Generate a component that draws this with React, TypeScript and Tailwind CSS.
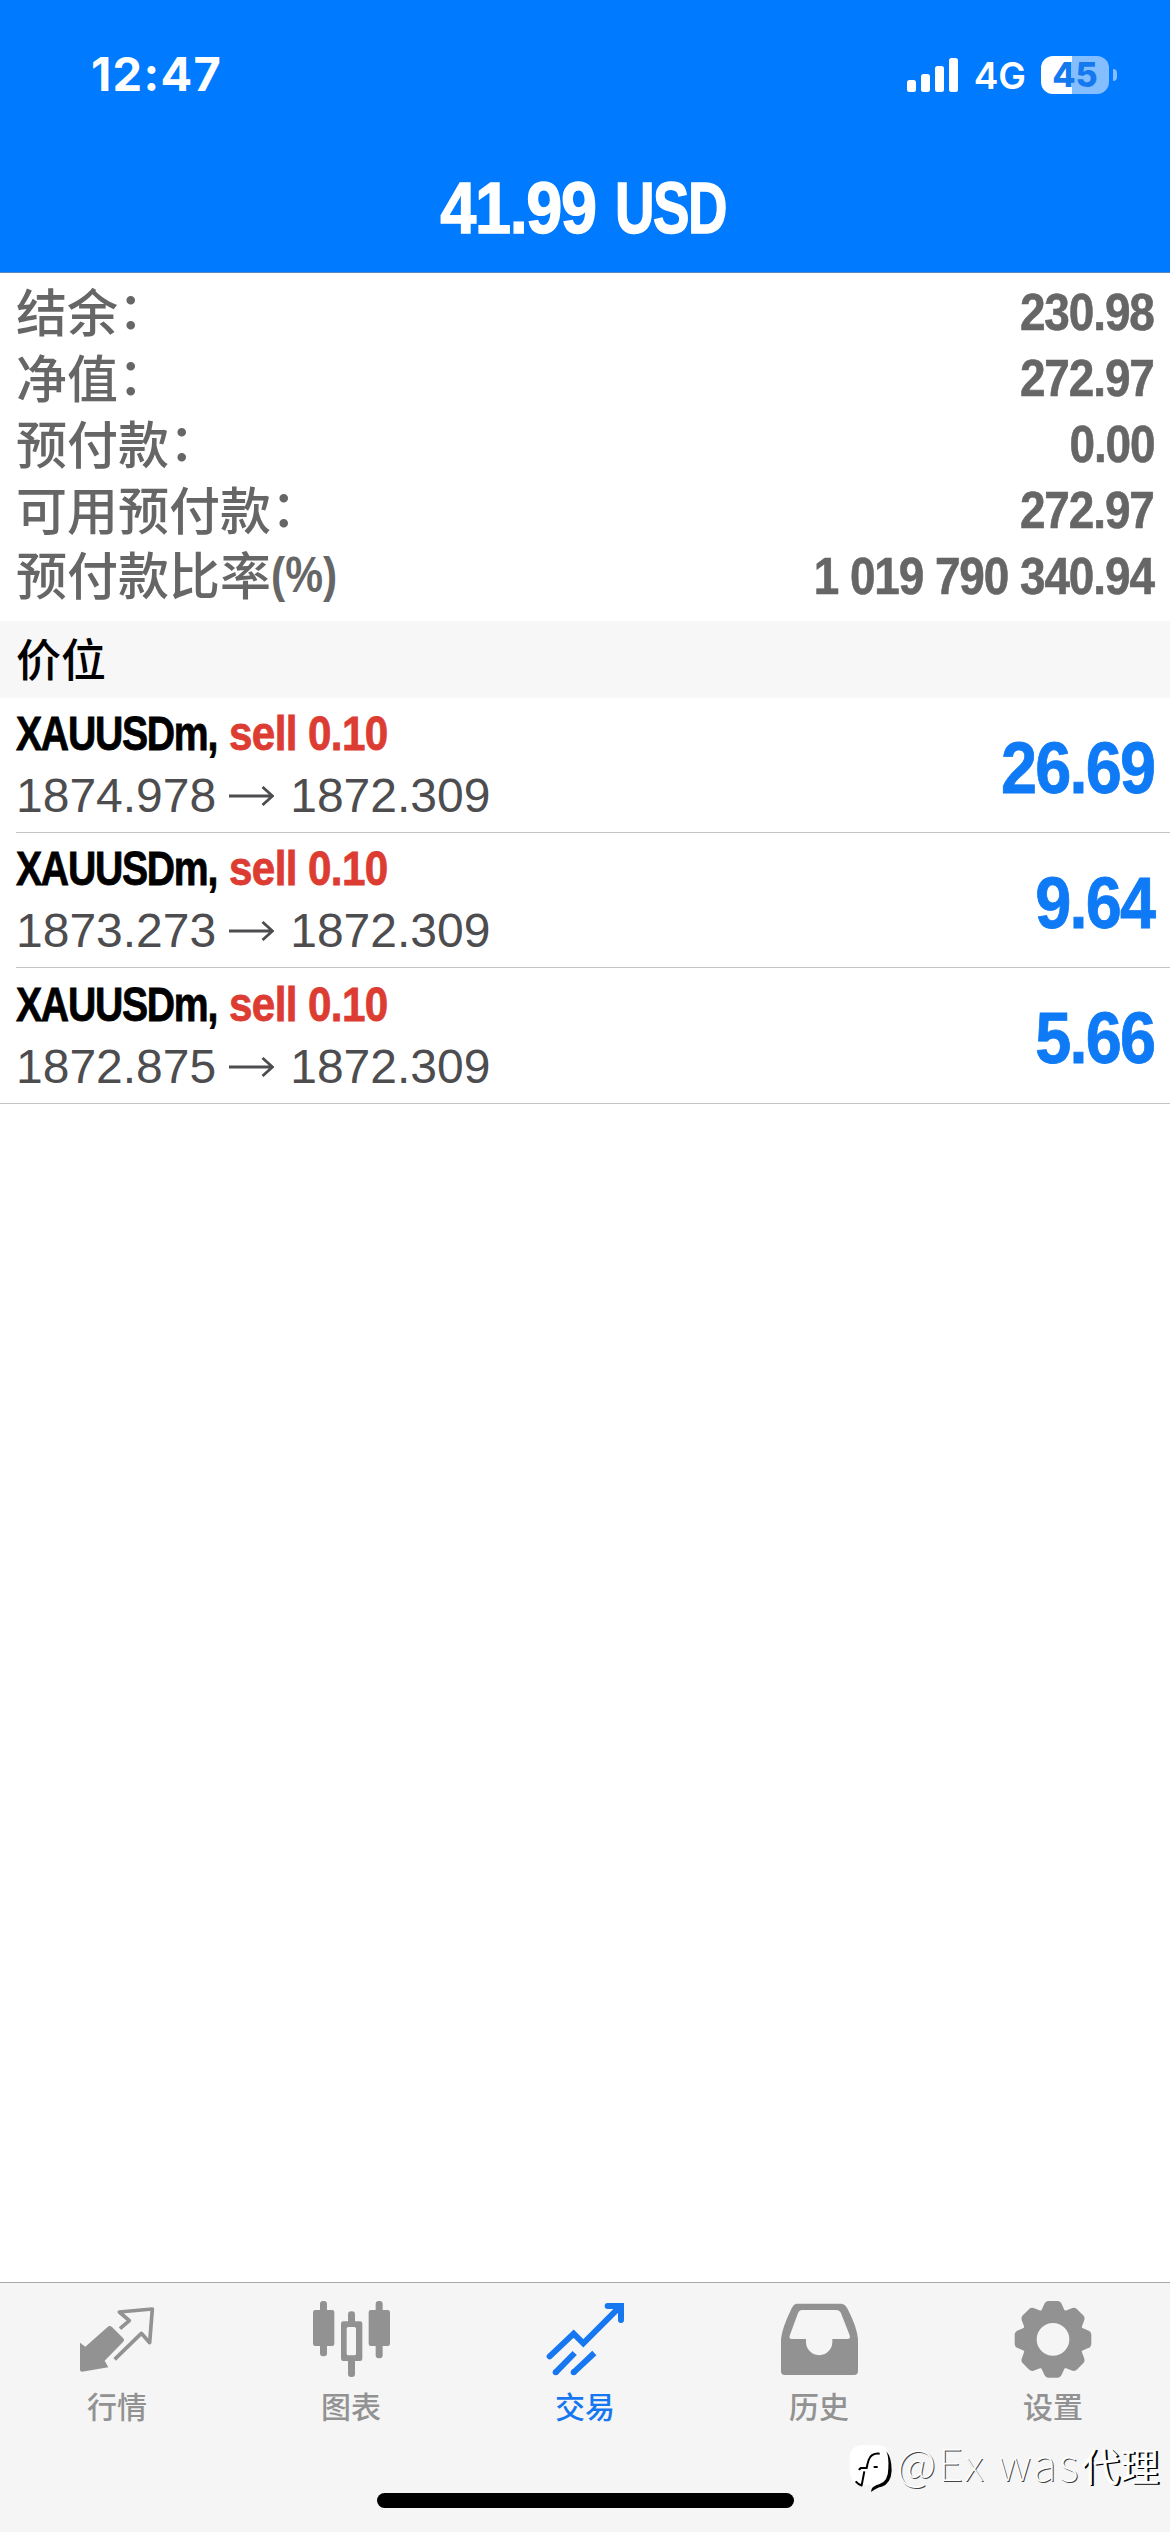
import type { ReactNode } from 'react'

interface SummaryItem {
  label: string
  colon?: boolean
  suffix?: string
  value: string
}

interface Position {
  symbol: string
  side: string
  open: string
  current: string
  profit: string
}

const summary: SummaryItem[] = [
  { label: '结余', colon: true, value: '230.98' },
  { label: '净值', colon: true, value: '272.97' },
  { label: '预付款', colon: true, value: '0.00' },
  { label: '可用预付款', colon: true, value: '272.97' },
  { label: '预付款比率', suffix: '(%)', value: '1 019 790 340.94' },
]

const positions: Position[] = [
  { symbol: 'XAUUSDm,', side: 'sell 0.10', open: '1874.978', current: '1872.309', profit: '26.69' },
  { symbol: 'XAUUSDm,', side: 'sell 0.10', open: '1873.273', current: '1872.309', profit: '9.64' },
  { symbol: 'XAUUSDm,', side: 'sell 0.10', open: '1872.875', current: '1872.309', profit: '5.66' },
]

function StatusBar() {
  return (
    <div className="flex h-[150px] items-center justify-between pl-[91px] pr-[53px] font-['Inter',sans-serif] text-white">
      <span className="mb-[4px] text-[47px] font-bold leading-none tracking-[1.3px]">12:47</span>
      <div className="flex items-center">
        <svg className="mr-[15px] h-[34px] w-[52px]" viewBox="0 0 52 34" fill="currentColor">
          <rect x="0" y="22" width="9" height="12" rx="2.5" />
          <rect x="14" y="16" width="9" height="18" rx="2.5" />
          <rect x="28" y="8" width="9" height="26" rx="2.5" />
          <rect x="42" y="0" width="9" height="34" rx="2.5" />
        </svg>
        <span className="mr-[15px] text-[37px] font-semibold leading-none">4G</span>
        <div className="flex h-[38px] w-[68px] items-center justify-center rounded-[12px] bg-linear-to-r from-white from-46% to-[#84beff] to-46%">
          <span className="text-[34px] font-extrabold leading-none text-[#1479ef]">45</span>
        </div>
        <div className="ml-[4px] h-[12px] w-[4px] rounded-r-full bg-[#84beff]" />
      </div>
    </div>
  )
}

function ArrowRight() {
  return (
    <svg className="ml-[13px] mr-[16px] h-[20px] w-[45px]" viewBox="0 0 45 20" fill="none" stroke="currentColor" strokeWidth="2.8">
      <path d="M0 10H43M33.5 1L43.5 10L33.5 19" />
    </svg>
  )
}

function QuotesIcon() {
  return (
    <svg className="size-[78px]" viewBox="0 0 234 234" fill="none">
      <path
        d="M6 128L22 140L88 82Q95 75 102 81L135 114Q141 120 135 126L80 182L91 202L12 215Q6 215 6 209Z"
        fill="currentColor"
      />
      <path d="M126 86L154 62L124 36L223 27L215 128L190 100L110 178" stroke="currentColor" strokeWidth="11" strokeLinejoin="round" />
    </svg>
  )
}

function ChartIcon() {
  return (
    <svg className="size-[78px]" viewBox="0 0 234 234" fill="currentColor">
      <rect x="24" y="3" width="21" height="166" rx="9" />
      <rect x="3" y="30" width="64" height="108" rx="7" />
      <rect x="108" y="34" width="21" height="197" rx="9" />
      <rect x="87" y="64" width="64" height="119" rx="7" />
      <rect x="104" y="81" width="28" height="85" rx="5" fill="#f5f5f5" />
      <rect x="191" y="3" width="21" height="172" rx="9" />
      <rect x="170" y="30" width="64" height="108" rx="7" />
    </svg>
  )
}

function TradeIcon() {
  return (
    <svg className="size-[78px]" viewBox="0 0 234 234" fill="none" stroke="currentColor" strokeWidth="18">
      <path d="M11 169L83 101L112 130L222 20" strokeLinecap="round" />
      <path d="M185 18H225V60" strokeLinecap="round" />
      <path d="M196 14H232V54Z" fill="currentColor" stroke="none" />
      <path d="M29 217L86 159" />
      <path d="M83 217L145 159" />
      <circle cx="29" cy="217" r="9" fill="currentColor" stroke="none" />
      <circle cx="83" cy="217" r="9" fill="currentColor" stroke="none" />
    </svg>
  )
}

function HistoryIcon() {
  return (
    <svg className="size-[78px]" viewBox="0 0 234 234" fill="currentColor" fillRule="evenodd">
      <path d="M50 11H184Q196 12 203 27Q232 84 234 118V214Q234 225 222 225H14Q3 225 3 214V118Q6 84 34 27Q40 12 50 11ZM66 30H168Q178 30 183 40L209 106Q212 117 203 117H157V126A39.5 39.5 0 0 1 78 126V117H38Q26 117 29 107L53 42Q57 30 66 30Z" />
    </svg>
  )
}

const teeth = [0, 45, 90, 135, 180, 225, 270, 315]

function SettingsIcon() {
  return (
    <svg className="size-[78px]" viewBox="-117 -118 234 234">
      {teeth.map((angle) => (
        <path
          key={angle}
          d="M-44 -76Q-32 -88 -27 -104Q-23 -115 -13 -115H13Q23 -115 27 -104Q32 -88 44 -76Z"
          fill="currentColor"
          transform={`rotate(${angle})`}
        />
      ))}
      <circle r="68" stroke="currentColor" strokeWidth="38" fill="none" />
    </svg>
  )
}

const tabs: { label: string; icon: ReactNode; active?: boolean }[] = [
  { label: '行情', icon: <QuotesIcon /> },
  { label: '图表', icon: <ChartIcon /> },
  { label: '交易', icon: <TradeIcon />, active: true },
  { label: '历史', icon: <HistoryIcon /> },
  { label: '设置', icon: <SettingsIcon /> },
]

function Watermark() {
  return (
    <div className="absolute right-[11px] top-[2438px] flex h-[60px] items-center whitespace-nowrap font-['Noto_Sans_CJK_SC',sans-serif] leading-[60px] text-white">
      <svg className="mr-[4px] h-[48px] w-[44px]" viewBox="0 0 132 144">
        <path d="M36 4H88Q120 6 120 44V76Q120 108 88 118L66 134V124L30 120Q2 114 2 80V40Q4 6 36 4Z" fill="#fff" />
        <path
          d="M112 22Q128 40 128 80Q126 118 98 128Q84 130 66 144Q64 128 92 120Q118 112 118 72Q120 40 112 22Z"
          fill="#000"
        />
        <path d="M92 29Q66 27 59 48Q55 60 53 72H36Q32 74 30 78M46 82L38 124M74 69H86M20 112Q28 122 40 125" stroke="#000" strokeWidth="6" fill="none" />
      </svg>
      <span className="-mt-[12px] text-[44px] font-thin tracking-[2.5px] [text-shadow:1px_1px_0_#444]">@Ex was</span>
      <span className="-mt-[8px] text-[39px] font-normal [text-shadow:2px_1px_0_#000]">代理</span>
    </div>
  )
}

export default function App() {
  return (
    <div className="relative flex h-[2532px] w-[1170px] flex-col overflow-hidden bg-white font-['Liberation_Sans',sans-serif]">
      <header className="h-[273px] border-b border-[#5b87b8] bg-[#007aff]">
        <StatusBar />
        <h1 className="flex pt-[22px] text-[72px] font-bold leading-[72px] text-white [-webkit-text-stroke:1.4px_currentColor]">
          <span className="w-[596px] text-right">
            <span className="inline-block origin-right scale-x-[0.9] tracking-[-1.5px]">41.99</span>
          </span>
          <span className="ml-[19px] origin-left scale-x-[0.76] tracking-[-2px]">USD</span>
        </h1>
      </header>

      <section className="flex h-[348px] flex-col px-4 pt-[6px] text-[#666]">
        {summary.map((item) => (
          <div key={item.label} className="flex h-[66px] items-center justify-between leading-[66px]">
            <div className="-mt-[5px] flex font-['Noto_Sans_CJK_SC',sans-serif] text-[51px] font-medium">
              <span>{item.label}</span>
              {item.colon && <span className="-mt-[3px]">：</span>}
              {item.suffix && (
                <span className="mt-[2px] origin-left scale-x-[0.85] font-['Liberation_Sans',sans-serif] text-[50px] font-bold">
                  {item.suffix}
                </span>
              )}
            </div>
            <span className="mt-px origin-right scale-x-[0.9] text-[51px] font-bold tracking-[-1.2px] [-webkit-text-stroke:0.6px_currentColor]">
              {item.value}
            </span>
          </div>
        ))}
      </section>

      <h2 className="h-[77px] bg-[#f7f7f7] px-4 font-['Noto_Sans_CJK_SC',sans-serif] text-[45px] font-medium leading-[74px] text-black">
        价位
      </h2>

      <section>
        {positions.map((position, index) => (
          <div key={index} className={index === positions.length - 1 ? 'border-b border-[#c4c4c6]' : ''}>
            <div
              className={`flex h-[135px] items-center justify-between pr-4 ${
                index === positions.length - 1 ? 'ml-4' : 'ml-4 border-b border-[#c4c4c6]'
              }`}
            >
              <div>
                <div className="-mt-px flex whitespace-nowrap text-[49px] font-bold leading-[62px] [-webkit-text-stroke:0.8px_currentColor]">
                  <div className="w-[213px]">
                    <span className="inline-block origin-left scale-x-[0.8] tracking-[-1.6px] text-black">{position.symbol}</span>
                  </div>
                  <span className="origin-left scale-x-[0.86] tracking-[-0.7px] text-[#dc3c32]">{position.side}</span>
                </div>
                <div className="mt-px flex items-center text-[48px] leading-[62px] text-[#4d4d50]">
                  <span>{position.open}</span>
                  <ArrowRight />
                  <span>{position.current}</span>
                </div>
              </div>
              <span className="mt-[5px] origin-right scale-x-[0.9] text-[72px] font-bold leading-none tracking-[-2px] text-[#0f7af5] [-webkit-text-stroke:0.8px_currentColor]">
                {position.profit}
              </span>
            </div>
          </div>
        ))}
      </section>

      <nav className="mt-auto flex h-[250px] flex-col border-t border-[#a8a8a8] bg-[#f5f5f5]">
        <div className="grid grid-cols-5 pt-[17px]">
          {tabs.map((tab) => (
            <div key={tab.label} className={`flex flex-col items-center ${tab.active ? 'text-[#1677f0]' : 'text-[#929292]'}`}>
              {tab.icon}
              <span className="mt-[6px] font-['Noto_Sans_CJK_SC',sans-serif] text-[30px] font-medium leading-[42px]">
                {tab.label}
              </span>
            </div>
          ))}
        </div>
        <div className="mx-auto mb-[24px] mt-auto h-[15px] w-[417px] rounded-full bg-black" />
      </nav>

      <Watermark />
    </div>
  )
}
